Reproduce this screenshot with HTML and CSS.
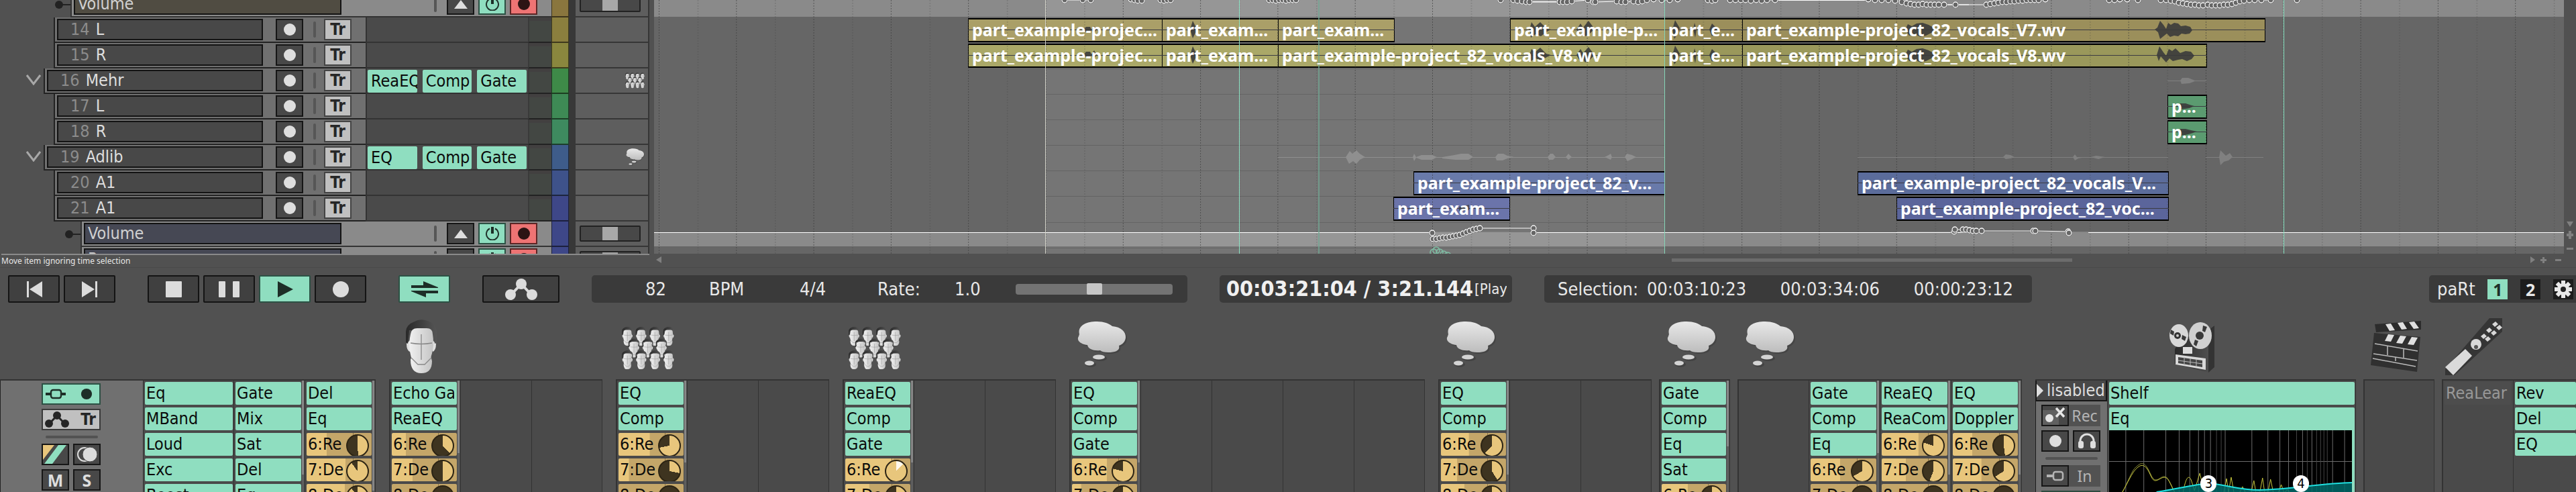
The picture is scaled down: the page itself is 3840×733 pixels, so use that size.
FILE: index.html
```html
<!DOCTYPE html>
<html lang="en">
<head>
<meta charset="utf-8">
<title>part_example-project_82</title>
<link rel="stylesheet" href="styles.css">
</head>
<body>
<svg class="defs" aria-hidden="true">
  <defs>
    <linearGradient id="g-cloud" x1="0" y1="0" x2="0" y2="1"><stop offset="0" stop-color="#e8e8e8"/><stop offset="1" stop-color="#bdbdbd"/></linearGradient>
    <linearGradient id="g-face" x1="0" y1="0" x2="1" y2="0"><stop offset="0" stop-color="#f0f0f0"/><stop offset="1" stop-color="#c4c4c4"/></linearGradient>
    <linearGradient id="g-dark" x1="0" y1="0" x2="1" y2="0"><stop offset="0" stop-color="#292929"/><stop offset="1" stop-color="#555"/></linearGradient>
    <symbol id="i-rec" viewBox="0 0 20 20"><circle cx="10" cy="10" r="9"/></symbol>
    <symbol id="i-up" viewBox="0 0 20 20"><path d="M10 4 20 17H0Z"/></symbol>
    <symbol id="i-power" viewBox="0 0 20 20"><path d="M6 2.5A9 9 0 1 0 14 2.5" fill="none" stroke="#20332b" stroke-width="2"/><path d="M8 0h4v10H8z"/></symbol>
    <symbol id="i-nodes" viewBox="0 0 48 32"><path d="M24 8 9 24M24 8l15 16" stroke="currentColor" stroke-width="4"/><circle cx="24" cy="8" r="8"/><circle cx="8" cy="24" r="8"/><circle cx="40" cy="24" r="8"/></symbol>
    <symbol id="i-io" viewBox="0 0 30 16"><path d="M0 6h8v4H0zM22 6h8v4h-8z"/><rect x="8" y="2" width="15" height="12" rx="3" fill="none" stroke="currentColor" stroke-width="2.4"/></symbol>
    <symbol id="a-head" viewBox="0 0 48 80">
      <path d="M8 60Q8 80 24 80Q40 80 40 62L38 54H10Z" fill="url(#g-face)"/>
      <path d="M2 36Q2 46 7 48L8 30ZM46 36Q46 46 41 48L40 30Z" fill="#e0e0e0"/>
      <path d="M1 34V18Q1 8 14 3Q24 -3 38 4Q47 8 47 20V34L44 36L42 16H6L4 36Z" fill="url(#g-dark)"/>
      <path d="M8 22Q9 13 18 13H32Q41 13 41 22Q44 40 38 57L29 67H19L9 57Q4 40 8 22Z" fill="url(#g-face)"/>
      <path d="M9 57 19 67H29L39 57M24 22V60M8 35Q24 38 40 35" fill="none" stroke="#888" stroke-width="1.3"/>
    </symbol>
    <symbol id="a-crowd" viewBox="0 0 84 66">
      <use href="#a-head" x="0" y="0" width="19" height="29"/><use href="#a-head" x="21" y="0" width="19" height="29"/><use href="#a-head" x="42" y="0" width="19" height="29"/><use href="#a-head" x="63" y="0" width="19" height="29"/>
      <use href="#a-head" x="10" y="18" width="19" height="29"/><use href="#a-head" x="31" y="18" width="19" height="29"/><use href="#a-head" x="52" y="18" width="19" height="29"/>
      <use href="#a-head" x="0" y="36" width="19" height="29"/><use href="#a-head" x="21" y="36" width="19" height="29"/><use href="#a-head" x="42" y="36" width="19" height="29"/><use href="#a-head" x="63" y="36" width="19" height="29"/>
    </symbol>
    <symbol id="a-cloud" viewBox="0 0 74 70">
      <path d="M3 20C0 8 12 1 29 1C40 1 47 4 52 8C65 9 72 16 72 24C72 30 68 35 62 37C64 44 57 47 46 47C40 47 36 46 34 44C24 45 16 42 15 36C5 35-2 29 2 23Z" fill="#3a3a3a" opacity=".5" transform="translate(2 2)"/>
      <path d="M3 20C0 8 12 1 29 1C40 1 47 4 52 8C65 9 72 16 72 24C72 30 68 35 62 37C64 44 57 47 46 47C40 47 36 46 34 44C24 45 16 42 15 36C5 35-2 29 2 23Z" fill="url(#g-cloud)"/>
      <ellipse cx="34" cy="56" rx="10" ry="4" fill="#3a3a3a" opacity=".6"/><ellipse cx="20" cy="65" rx="8" ry="4" fill="#3a3a3a" opacity=".6"/>
      <ellipse cx="32" cy="54" rx="9" ry="3.6" fill="#d4d4d4"/><ellipse cx="18" cy="63" rx="7" ry="3.4" fill="#d4d4d4"/>
    </symbol>
  </defs>
</svg>

<main class="app">
<section class="arranger">
  <div class="tcp">
    <div class="row env first" style="--in:105px;--lane:#504c42;--tint:#8a763e">
      <div class="env-main"><span class="bullet"></span><span class="field">Volume</span><span class="bar"></span>
        <button class="sq" aria-label="Move envelope"><svg class="ico"><use href="#i-up"/></svg></button><button class="sq on" aria-label="Bypass"><svg class="ico"><use href="#i-power"/></svg></button><button class="sq arm" aria-label="Arm"><svg class="ico"><use href="#i-rec"/></svg></button></div>
      <div class="tint"></div><div class="rail"></div><div class="side"><input type="range" class="mini" aria-label="Volume"></div>
    </div>
    <div class="row" style="--in:80px;--tint:#8b7f3e"><div class="main"><span class="field"><i>14</i>L</span><button class="sq" aria-label="Record arm"><svg class="ico"><use href="#i-rec"/></svg></button><span class="bar"></span><button class="sq tr">Tr</button></div><div class="fx"></div><div class="meter"></div><div class="tint"></div><div class="rail"></div><div class="side"></div></div>
    <div class="row" style="--in:80px;--tint:#8a873e"><div class="main"><span class="field"><i>15</i>R</span><button class="sq" aria-label="Record arm"><svg class="ico"><use href="#i-rec"/></svg></button><span class="bar"></span><button class="sq tr">Tr</button></div><div class="fx"></div><div class="meter"></div><div class="tint"></div><div class="rail"></div><div class="side"></div></div>
    <div class="row folder" style="--in:65px;--tint:#3e8a48"><div class="main"><svg class="fold" viewBox="0 0 22 16"><path d="M1 1 11 14 21 1"/></svg><span class="field"><i>16</i>Mehr</span><button class="sq" aria-label="Record arm"><svg class="ico"><use href="#i-rec"/></svg></button><span class="bar"></span><button class="sq tr">Tr</button></div><div class="fx"><button class="plug">ReaEQ</button><button class="plug">Comp</button><button class="plug">Gate</button></div><div class="meter"></div><div class="tint"></div><div class="rail"></div><div class="side"><svg class="thumb"><use href="#a-crowd"/></svg></div></div>
    <div class="row" style="--in:80px;--tint:#3e8a55"><div class="main"><span class="field"><i>17</i>L</span><button class="sq" aria-label="Record arm"><svg class="ico"><use href="#i-rec"/></svg></button><span class="bar"></span><button class="sq tr">Tr</button></div><div class="fx"></div><div class="meter"></div><div class="tint"></div><div class="rail"></div><div class="side"></div></div>
    <div class="row" style="--in:80px;--tint:#3e8a5f"><div class="main"><span class="field"><i>18</i>R</span><button class="sq" aria-label="Record arm"><svg class="ico"><use href="#i-rec"/></svg></button><span class="bar"></span><button class="sq tr">Tr</button></div><div class="fx"></div><div class="meter"></div><div class="tint"></div><div class="rail"></div><div class="side"></div></div>
    <div class="row folder" style="--in:65px;--tint:#3e5c8a"><div class="main"><svg class="fold" viewBox="0 0 22 16"><path d="M1 1 11 14 21 1"/></svg><span class="field"><i>19</i>Adlib</span><button class="sq" aria-label="Record arm"><svg class="ico"><use href="#i-rec"/></svg></button><span class="bar"></span><button class="sq tr">Tr</button></div><div class="fx"><button class="plug">EQ</button><button class="plug">Comp</button><button class="plug">Gate</button></div><div class="meter"></div><div class="tint"></div><div class="rail"></div><div class="side"><svg class="thumb"><use href="#a-cloud"/></svg></div></div>
    <div class="row" style="--in:80px;--tint:#3e528a"><div class="main"><span class="field"><i>20</i>A1</span><button class="sq" aria-label="Record arm"><svg class="ico"><use href="#i-rec"/></svg></button><span class="bar"></span><button class="sq tr">Tr</button></div><div class="fx"></div><div class="meter"></div><div class="tint"></div><div class="rail"></div><div class="side"></div></div>
    <div class="row" style="--in:80px;--tint:#3e4788"><div class="main"><span class="field"><i>21</i>A1</span><button class="sq" aria-label="Record arm"><svg class="ico"><use href="#i-rec"/></svg></button><span class="bar"></span><button class="sq tr">Tr</button></div><div class="fx"></div><div class="meter"></div><div class="tint"></div><div class="rail"></div><div class="side"></div></div>
    <div class="row env" style="--in:120px;--lane:#464854;--tint:#3e4788">
      <div class="env-main"><span class="bullet"></span><span class="field">Volume</span><span class="bar"></span>
        <button class="sq" aria-label="Move envelope"><svg class="ico"><use href="#i-up"/></svg></button><button class="sq on" aria-label="Bypass"><svg class="ico"><use href="#i-power"/></svg></button><button class="sq arm" aria-label="Arm"><svg class="ico"><use href="#i-rec"/></svg></button></div>
      <div class="tint"></div><div class="rail"></div><div class="side"><input type="range" class="mini" aria-label="Volume"></div>
    </div>
    <div class="row env" style="--in:120px;--lane:#464854;--tint:#3e4788">
      <div class="env-main"><span class="field">Pan</span><span class="bar"></span>
        <button class="sq" aria-label="Move envelope"><svg class="ico"><use href="#i-up"/></svg></button><button class="sq on" aria-label="Bypass"><svg class="ico"><use href="#i-power"/></svg></button><button class="sq arm" aria-label="Arm"><svg class="ico"><use href="#i-rec"/></svg></button></div>
      <div class="tint"></div><div class="rail"></div><div class="side"><input type="range" class="mini" aria-label="Pan"></div>
    </div>
  </div>

  <div class="timeline">
    <div class="selection" style="--s:583;--w:923"></div>
    <div class="lane short envlane"></div>
    <div class="lane">
      <div class="clip sand lit" style="--s:468;--w:290"><span>part_example-projec...</span></div>
      <div class="clip sand lit" style="--s:757;--w:174"><span>part_exam...</span></div>
      <div class="clip sand lit" style="--s:930;--w:174"><span>part_exam...</span></div>
      <div class="clip sand lit" style="--s:1276;--w:231"><span>part_example-p...</span></div>
      <div class="clip sand" style="--s:1506;--w:117"><span>part_e...</span></div>
      <div class="clip sand" style="--s:1622;--w:780"><span>part_example-project_82_vocals_V7.wv</span></div>
    </div>
    <div class="lane">
      <div class="clip olive lit" style="--s:468;--w:290"><span>part_example-projec...</span></div>
      <div class="clip olive lit" style="--s:757;--w:174"><span>part_exam...</span></div>
      <div class="clip olive lit" style="--s:930;--w:577"><span>part_example-project_82_vocals_V8.wv</span></div>
      <div class="clip olive" style="--s:1506;--w:117"><span>part_e...</span></div>
      <div class="clip olive" style="--s:1622;--w:693"><span>part_example-project_82_vocals_V8.wv</span></div>
    </div>
    <div class="lane"></div>
    <div class="lane"><div class="clip green" style="--s:2256;--w:59"><span>p...</span></div></div>
    <div class="lane"><div class="clip green" style="--s:2256;--w:59"><span>p...</span></div></div>
    <div class="lane"></div>
    <div class="lane">
      <div class="clip blue lit" style="--s:1132;--w:375"><span>part_example-project_82_v...</span></div>
      <div class="clip blue" style="--s:1794;--w:464"><span>part_example-project_82_vocals_V...</span></div>
    </div>
    <div class="lane">
      <div class="clip indigo lit" style="--s:1102;--w:174"><span>part_exam...</span></div>
      <div class="clip indigo" style="--s:1852;--w:406"><span>part_example-project_82_voc...</span></div>
    </div>
    <div class="lane envlane low"></div>
    <svg class="overlay" viewBox="0 0 2847 378" preserveAspectRatio="none">
      <defs>
        <pattern id="grid" patternUnits="userSpaceOnUse" x="7" y="0" width="115.3" height="4"><path d="M.5 0V2" stroke="#333" stroke-opacity=".6"/><path d="M58.5 0V2" stroke="#333" stroke-opacity=".3"/></pattern>
        <marker id="pt" viewBox="0 0 12 12" refX="6" refY="6" markerWidth="12" markerHeight="12" markerUnits="userSpaceOnUse"><circle cx="6" cy="6" r="5" fill="#444"/><circle cx="6" cy="6" r="4" fill="#666" stroke="#fff" stroke-width="1.3"/></marker>
      </defs>
      <rect width="2847" height="378" fill="url(#grid)"/>
      <path d="M583 102.5H1506M583 140.5H1506M583 178.5H1506M583 216.5H1506M583 254.5H1132M583 292.5H1506M583 331.5H1506M583 369.5H1506" stroke="#5c5c5c" stroke-opacity=".7"/>
      <g stroke="#3b3b42" fill="none"><path d="M468 44.500H1104M1276 44.500H2402M468 82.500H2315M2256 158.500H2315M2256 196.500H2315M1132 272.500H1507M1794 272.500H2258M1102 310.500H1276M1852 310.500H2258"/></g>
      <g fill="#3b3b3b" fill-opacity=".9">
        <path d="M640 44l4-4h6l2 4 4-5 4 5-4 5-4-4-2 3h-6zM640 82l4-5h6l2 4 4-6 4 7-4 5-4-4-2 2h-6zM799 44l4-13 4 8 5 5-5 5-4 8zM799 82l4-13 4 8 5 5-5 5-4 8z"/>
        <path d="M1305 44l3-11 5 7 8-7 9 9 7 2-6 3-9 7-8-3-7 5zM1375 44l6-9 4 6 8-10 9 12-8 8-6 3-6-8-3 4zM1305 82l3-9 5 5 8-7 9 9 7 2-6 3-9 5-8-3-7 4zM1375 82l6-9 4 6 8-9 9 12-8 8-6 3-6-8-3 4z"/>
        <path d="M1518 44l4-14 7 12-3 8-5 8zM1549 44l2-10 3 10-2 12zM1573 44l4-9 8 8-4 7-4 4zM1518 82l4-14 7 12-3 8-5 8zM1549 82l2-10 3 10-2 12zM1573 82l4-9 8 8-4 7-4 4z"/>
        <path d="M1865 44l4-8 6 3 7-4 9-1 9 3 9 5-3 6-10 5-8 2-9-4-8 2zM1865 82l4-8 6 3 7-4 9-1 9 3 9 5-3 6-10 5-8 2-9-4-8 2z"/>
        <path d="M2237 44l4-3 4-10 5 6 4 6 3-9 4 3 5-3 6 1 4 4 7-1 7 2 3 5-4 5-6 1-6-1-5 4-6-1-6 2-5-5-5 4-5 4-3-10zM2240 82l4-13 6 9 4 5 4-10 5 3 5-4 7 7 8-3 8 1 5 6-4 5-7 3-7-3-6 1-8 2-5-4-5 6-8-9-3 7z"/>
        <path d="M2273 158l2-4 8 0 6 2 7 2-7 3-6 1-8 1zM2273 196l2-4 8 0 8 2 9 2-9 3-8 2-8 1z"/>
        <path d="M1257 272l5-5 4 5-4 4zM1200 308l15-3v8l-15 2zM2116 272l2-5 3 5-3 6z" fill-opacity=".7"/>
      </g>
      <g fill="#8f8f8f"><path d="M930 234h576v1H930z"/>
        <path d="M1031 234l6-9 4 4 6-5 5 5 8 5-8 4-5 6-5-4-6 4zM1131 234l2-5 3 5 8-3 16 0 7 3-7 4-16 0-8-3-3 5zM1175 234l18-3 10-2h11l7 5-7 4h-20l-19-2zM1254 234l4-5h8l6 3 10 2-10 2-7 3h-9zM1332 234l4-5h4l4 5-4 4h-6zM1359 234l4-5 5 5-5 4zM1417 234l6-3 3-2 2 5-2 4zM1447 234l3-5 8 2 6 3-6 3-7 3z"/></g>
      <g fill="#808080"><path d="M1794 234h463v1h-463zM2313 234h86v1h-86zM2256 120h58v1h-58zM1852 345h405v1h-405zM1102 345h175v1h-175z"/>
        <path d="M2011 234l4-4 7 1 6 3-6 2-7 1zM2115 234l3-4 3 4 12 0-10 2-5 3zM2142 234l8-2 13 2-10 3zM2333 234l2-10 8 8 6-4 4 6-6 5-7 2-5 5zM2275 120l3-4h9l10 4 7 1-7 0-8 3-12 1z"/></g>
      <g class="envline"><path d="M0 346.500H1160M1316 346.500H1964M2138 346.500H2847"/><path d="M1306 2.500h45M1672 .5h139M1926 7h34"/></g>
      <g class="points">
        <polyline points="612,0 639,0 651,0"/><polyline points="711,-1 716,0 721,1 727,1"/><polyline points="755,0 760,1 765,0 770,0"/><polyline points="917,0 922,0 927,1 932,0 937,0 942,1 947,0 952,0 957,0"/>
        <polyline points="1262,0"/><polyline points="1281,0 1287,1 1294,2 1300,3 1305,3 1350,3 1355,3 1361,3 1368,2 1392,0 1400,3 1403,3 1435,2 1442,3 1448,3 1460,2 1467,3 1473,2 1480,0 1490,-1 1502,0 1514,0 1526,-1"/>
        <polyline points="1571,0 1577,1 1582,0"/><polyline points="1604,0 1612,0 1620,0 1627,0 1635,1 1643,0 1651,1 1659,0 1671,0"/>
        <polyline points="1810,-1 1820,0 1830,0 1840,0 1850,1 1860,3 1867,5 1873,6 1879,7 1885,7 1891,6 1897,7 1903,7 1909,7 1915,7 1923,7 1940,7 1986,7 1992,6 1998,5 2004,4 2010,3 2016,3 2022,2 2028,2 2034,1 2040,1 2046,0 2052,0 2058,0 2064,0 2074,-1"/>
        <polyline points="2169,0 2177,0 2185,-1 2196,-1 2212,0"/><polyline points="2246,0 2254,0 2261,1 2267,2 2273,4 2279,5 2285,6 2291,7 2297,7 2303,8 2309,8 2316,7 2322,8 2328,8 2334,8 2340,7 2346,7 2352,6 2358,4 2364,2 2370,1 2378,0 2386,0 2396,0 2410,0"/><polyline points="2449,0"/>
        <polyline points="1160,347 1161,356 1166,356 1171,355 1176,354 1181,354 1186,353 1191,352 1196,351 1201,350 1206,348 1211,346 1216,344 1221,342 1226,341 1231,340 1311,340 1311,347"/>
        <polyline points="1938,345 1939,342 1951,342 1956,342 1961,343 1966,344 1971,344 1979,344 2056,344 2059,344 2108,345 2109,347"/>
      </g>
      <g fill="none" stroke="#7fbfa5" stroke-width="1.500"><circle cx="1162" cy="376" r="5"/><circle cx="1166" cy="373" r="5"/><circle cx="1171" cy="376" r="5"/><circle cx="1177" cy="379" r="5"/><circle cx="1183" cy="381" r="5"/></g>
      <path d="M872.500 0V378M2429.500 0V378" stroke="#8ce4c4"/><path d="M991 0V378" stroke="#6fa893" stroke-width="2" stroke-opacity=".7"/><path d="M1506.500 0V378" stroke="#86d6b8"/><path d="M583.500 0V378" stroke="#d2d2c8"/>
    </svg>
  </div>
  <div class="vscroll"><svg viewBox="0 0 18 60"><path d="M4 12h10L9 20ZM7 26h4v4h3v4h-3v4H7v-4H4v-4h3zM4 51h10v3H4z" /></svg></div>
</section>

<div class="status"><span class="hint">Move item ignoring time selection</span>
  <div class="hscroll"><svg class="arrow" viewBox="0 0 8 10"><path d="M8 0V10L0 5Z"/></svg><span class="thumb-bar"></span><svg class="zoomers" viewBox="0 0 50 10"><path d="M2 0V10L9 5ZM20 1h3v3h3v3h-3v3h-3v-3h-3V4h3zM39 4h9v3h-9z"/></svg></div>
</div>

<nav class="transport">
  <div class="btns">
    <button class="tb" aria-label="Go to start"><svg viewBox="0 0 24 24"><path d="M1 0h3v24H1zM24 0V24L5 12Z"/></svg></button>
    <button class="tb" aria-label="Go to end"><svg viewBox="0 0 24 24"><path d="M20 0h3v24h-3zM0 0V24L19 12Z"/></svg></button>
  </div>
  <div class="btns">
    <button class="tb" aria-label="Stop"><svg viewBox="0 0 24 24"><rect width="24" height="24" rx="1"/></svg></button>
    <button class="tb" aria-label="Pause"><svg class="wide" viewBox="0 0 32 24"><rect width="10" height="24" rx="1"/><rect x="21" width="10" height="24" rx="1"/></svg></button>
    <button class="tb on" aria-label="Play"><svg viewBox="0 0 24 24"><path d="M1 0 24 12 1 24Z"/></svg></button>
    <button class="tb" aria-label="Record"><svg viewBox="0 0 24 24"><circle cx="12" cy="12" r="12"/></svg></button>
  </div>
  <button class="tb on" aria-label="Repeat"><svg class="loop" viewBox="0 0 40 24"><path d="M0 6H18V0L40 9V10H0ZM40 14V18H22V24L0 15V14Z"/></svg></button>
  <button class="tb big" aria-label="Automation"><svg class="loop tall"><use href="#i-nodes"/></svg></button>
  <div class="panel tempo"><span>82</span><span>BPM</span><span>4/4</span><label for="rate">Rate:</label><span>1.0</span><input id="rate" class="rate" type="range" min="0" max="100" value="50"></div>
  <div class="panel clock"><b>00:03:21:04 / 3:21.144</b><span>[Playing]</span></div>
  <div class="panel sel"><span>Selection:</span><span>00:03:10:23</span><span>00:03:34:06</span><span>00:00:23:12</span></div>
  <div class="panel layouts"><span>paRt</span><button class="lb on">1</button><button class="lb">2</button><button class="lb" aria-label="Settings"><svg viewBox="0 0 26 26"><g fill="currentColor"><path d="M10 0h6v26h-6zM0 10h26v6H0z"/><path d="M10 0h6v26h-6z" transform="rotate(45 13 13)"/><path d="M10 0h6v26h-6z" transform="rotate(-45 13 13)"/><circle cx="13" cy="13" r="9"/></g><circle cx="13" cy="13" r="4" fill="#222"/></svg></button></div>
</nav>

<section class="mixer">
  <div class="group master">
    <div class="art"></div>
    <div class="cols">
      <div class="ctl">
        <button class="wide-btn on" aria-label="Routing"><svg class="io"><use href="#i-io"/></svg><svg class="dot"><use href="#i-rec"/></svg></button>
        <button class="wide-btn pale"><svg class="nd"><use href="#i-nodes"/></svg>Tr</button>
        <span class="hbar"></span>
        <div class="pair"><button class="sq" aria-label="Effects"><svg class="full" viewBox="0 0 37 28"><path d="M0 0H17L0 22Z" fill="#e8c67c"/><path d="M23 0H35L14 28H2Z" fill="#8fdec0"/></svg></button><button class="sq" aria-label="Mono"><svg class="mono" viewBox="0 0 32 24"><circle cx="12" cy="12" r="10" fill="none" stroke="#dcdcdc" stroke-width="2"/><circle cx="20" cy="12" r="11" fill="#dcdcdc" stroke="#484848" stroke-width="1"/></svg></button></div>
        <div class="pair"><button class="sq ms">M</button><button class="sq ms">S</button></div>
      </div>
      <div class="col w135"><button class="slot">Eq</button><button class="slot">MBand</button><button class="slot">Loud</button><button class="slot">Exc</button><button class="slot">Boost</button></div>
      <div class="col sb" style="--sb:140px"><button class="slot">Gate</button><button class="slot">Mix</button><button class="slot">Sat</button><button class="slot">Del</button><button class="slot">Eq</button></div>
      <div class="col sb" style="--sb:164px"><button class="slot">Del</button><button class="slot">Eq</button><button class="slot send" style="--f:31%;--k:49%">6:Re</button><button class="slot send" style="--f:60%;--k:90%">7:De</button><button class="slot send" style="--f:59%;--k:90%">8:De</button></div>
    </div>
  </div>
  <div class="group"><div class="art"><svg class="a-head"><use href="#a-head"/></svg></div><div class="cols">
    <div class="col sb" style="--sb:108px"><button class="slot">Echo Ga</button><button class="slot">ReaEQ</button><button class="slot send" style="--f:22%;--k:38%">6:Re</button><button class="slot send" style="--f:32%;--k:50%">7:De</button><button class="slot send" style="--f:0%;--k:0%">8:De</button></div><div class="col"></div><div class="col"></div></div></div>
  <div class="group"><div class="art"><svg class="a-crowd"><use href="#a-crowd"/></svg></div><div class="cols">
    <div class="col sb" style="--sb:122px"><button class="slot">EQ</button><button class="slot">Comp</button><button class="slot send" style="--f:48%;--k:72%">6:Re</button><button class="slot send" style="--f:16%;--k:28%">7:De</button><button class="slot send" style="--f:0%;--k:0%">8:De</button></div><div class="col"></div><div class="col"></div></div></div>
  <div class="group"><div class="art"><svg class="a-crowd"><use href="#a-crowd"/></svg></div><div class="cols">
    <div class="col sb" style="--sb:122px"><button class="slot">ReaEQ</button><button class="slot">Comp</button><button class="slot">Gate</button><button class="slot send boost" style="--f:74%;--k:12%">6:Re</button><button class="slot send" style="--f:37%;--k:62%">7:De</button></div><div class="col"></div><div class="col"></div></div></div>
  <div class="group"><div class="art"><svg class="a-cloud"><use href="#a-cloud"/></svg></div><div class="cols">
    <div class="col sb" style="--sb:122px"><button class="slot">EQ</button><button class="slot">Comp</button><button class="slot">Gate</button><button class="slot send" style="--f:54%;--k:79%">6:Re</button><button class="slot send" style="--f:14%;--k:60%">7:De</button></div><div class="col"></div><div class="col"></div><div class="col"></div><div class="col"></div></div></div>
  <div class="group"><div class="art"><svg class="a-cloud"><use href="#a-cloud"/></svg></div><div class="cols">
    <div class="col sb" style="--sb:140px"><button class="slot">EQ</button><button class="slot">Comp</button><button class="slot send" style="--f:43%;--k:62%">6:Re</button><button class="slot send" style="--f:25%;--k:41%">7:De</button><button class="slot send" style="--f:36%;--k:62%">8:De</button></div><div class="col"></div><div class="col"></div></div></div>
  <div class="group near"><div class="art"><svg class="a-cloud"><use href="#a-cloud"/></svg></div><div class="cols">
    <div class="col sb" style="--sb:98px"><button class="slot">Gate</button><button class="slot">Comp</button><button class="slot">Eq</button><button class="slot">Sat</button><button class="slot send" style="--f:41%;--k:60%">6:Re</button></div></div></div>
  <div class="group near"><div class="art"><svg class="a-cloud"><use href="#a-cloud"/></svg></div><div class="cols">
    <div class="col"></div>
    <div class="col sb" style="--sb:108px"><button class="slot">Gate</button><button class="slot">Comp</button><button class="slot">Eq</button><button class="slot send" style="--f:45%;--k:67%">6:Re</button><button class="slot send" style="--f:0%;--k:0%">7:De</button></div>
    <div class="col sb" style="--sb:140px"><button class="slot">ReaEQ</button><button class="slot">ReaCom</button><button class="slot send" style="--f:56%;--k:80%">6:Re</button><button class="slot send" style="--f:37%;--k:56%">7:De</button><button class="slot send" style="--f:0%;--k:0%">8:De</button></div>
    <div class="col sb" style="--sb:140px"><button class="slot">EQ</button><button class="slot">Doppler</button><button class="slot send" style="--f:30%;--k:48%">6:Re</button><button class="slot send" style="--f:44%;--k:66%">7:De</button><button class="slot send" style="--f:0%;--k:0%">8:De</button></div></div></div>
  <div class="group grow"><div class="art film"><svg class="a-cam" viewBox="0 0 68 76">
      <path d="M8 40 14 30 56 6 67 4V66L58 75 8 62Z" fill="url(#g-dark)"/><path d="M58 75V12L67 5V67Z" fill="#333"/>
      <ellipse cx="14" cy="20" rx="14" ry="17" fill="#d8d8d8"/><ellipse cx="46" cy="20" rx="17" ry="20" fill="#d0d0d0"/>
      <circle cx="12" cy="20" r="5" fill="#333"/><circle cx="12" cy="20" r="2" fill="#ccc"/><circle cx="45" cy="20" r="6" fill="#3a3a3a"/>
      <path d="M2 11l5 3-1 6-5-3zM19 19l6 3-2 6-5-3zM50 5l6 2-3 8-4-2zM38 26l5 2-3 8-4-3z" fill="#3a3a3a"/>
      <path d="M20 37h14v10H20z" fill="#ddd"/><path d="M9 48 54 54V71L9 63Z" fill="#d8d8d8"/><path d="M13 52 49 57V67L13 61Z" fill="#444"/><path d="M22 52V62M31 54V65M40 55V66M13 57 49 62" stroke="#bbb"/></svg></div>
    <div class="cols">
    <div class="rec">
      <div class="mode"><svg viewBox="0 0 10 20"><path d="M0 0 10 10 0 20Z"/></svg>lisabled</div>
      <div class="recbody">
        <div class="labelled"><button class="sq" aria-label="Record mode"><svg class="full" viewBox="0 0 37 28"><path d="M0 6H24V28H0Z" fill="#606060"/><circle cx="10" cy="18" r="6" fill="#e6e6e6"/><path d="M20 3 32 16M32 3 20 16" stroke="#e6e6e6" stroke-width="3.500"/></svg></button><span>Rec</span></div>
        <div class="pair"><button class="sq" aria-label="Record arm"><svg class="ico"><use href="#i-rec"/></svg></button><button class="sq" aria-label="Monitor"><svg class="phones" viewBox="0 0 28 24"><path d="M4 15V12a10 10 0 0 1 20 0v3" fill="none" stroke="#e0e0e0" stroke-width="3"/><rect x="1" y="12" width="8" height="11" rx="3"/><rect x="19" y="12" width="8" height="11" rx="3"/></svg></button></div>
        <span class="hbar"></span>
        <div class="labelled"><button class="sq" aria-label="Input"><svg class="inp" viewBox="0 0 26 16"><path d="M0 6h9v4H0z"/><rect x="10" y="2" width="14" height="12" rx="3" fill="none" stroke="currentColor" stroke-width="2.500"/></svg></button><span>In</span></div>
        <div class="gmeter"></div>
      </div>
    </div>
    <div class="col stretch"><button class="slot">Shelf</button><button class="slot flat">Eq</button>
      <div class="graph"><svg viewBox="0 0 364 92" preserveAspectRatio="none">
        <rect width="364" height="92" fill="#000"/>
        <path d="M25 0V92M52 0V92M85 0V92M105 0V92M121 0V92M134 0V92M143 0V92M152 0V92M174 0V92M214 0V92M238 0V92M256 0V92M269 0V92M290 0V92M304 0V92M335 0V92M353 0V92M0 46.500H364" stroke="#6c6c6c"/>
        <path d="M161 0V92M168 0V92M281 0V92M297 0V92M311 0V92M317 0V92M322 0V92M327 0V92" stroke="#454545"/>
        <g fill="none"><path d="M20 92C28 78 34 60 40 55C46 50 50 46 56 54C62 62 64 74 70 74C76 74 80 66 86 70C92 76 96 90 100 94" stroke="#8a8a3a"/>
        <path d="M20 92C28 78 34 64 40 58C46 52 50 50 56 56C62 64 64 76 70 75C76 74 80 68 86 71C92 76 96 92 100 94M111 92C115 70 119 66 123 74L128 90 136 64 142 90M172 92L176 72 179 92 183 70 187 92M196 92L200 84 204 92M213 92L217 75 220 92M226 92L230 71 233 92M238 92L242 73 246 92M254 92L258 81 262 92M264 92L267 88 270 92" stroke="#c8c83c"/></g>
        <path d="M71 92C100 88 125 81 150 79C180 82 195 89 225 89C270 88 320 79 364 78V92Z" fill="#006a6a" fill-opacity=".85"/><path d="M71 92C100 88 125 81 150 79C180 82 195 89 225 89C270 88 320 79 364 78" fill="none" stroke="#1fe0e0" stroke-width="2"/>
        </svg><span class="band" style="left:41%">3</span><span class="band" style="left:79%">4</span></div>
    </div></div></div>
  <div class="group near"><div class="art clap"><svg viewBox="0 0 76 78">
      <path d="M6 5 75 0V13L8 17Z" fill="#2c2c2c"/><path d="M22 5 30 4 36 14 28 15ZM40 3 48 2 54 12 46 13ZM57 2 65 1 72 11 64 12Z" fill="#e0e0e0"/>
      <path d="M5 18 74 24 69 76 0 66Z" fill="#303030"/><path d="M26 20 35 21 30 31 21 30ZM44 22 53 23 47 34 38 33ZM61 24 70 25 64 36 55 35Z" fill="#e0e0e0"/>
      <path d="M6 34 70 45M4 49 69 59M3 56 67 68M25 38V51M49 42V55M37 54V60" stroke="#bbb" stroke-width="1.500"/></svg></div><div class="cols"><div class="col"></div></div></div>
  <div class="group near last"><div class="art remote"><svg viewBox="0 0 86 86">
      <path d="M66 0H85V20L14 85H0V76Z" fill="#353535"/><path d="M0 73 30 46 40 56 12 85Z" fill="#dadada"/><circle cx="46" cy="39" r="8" fill="#d8d8d8"/><circle cx="46" cy="43" r="3" fill="#555"/>
      <path d="M53 27l5-4 4 4-5 4zM61 18l5-4 4 4-5 4zM70 9l5-4 4 4-5 4zM59 31l5-4 4 4-5 4zM68 22l5-4 4 4-5 4zM76 14l5-4 4 4-5 4z" fill="#d8d8d8"/></svg></div><div class="cols">
    <div class="col"><button class="slot off">ReaLear</button></div><div class="col"><button class="slot">Rev</button><button class="slot">Del</button><button class="slot">EQ</button></div></div></div>
</section>
</main>
</body>
</html>
```
FILE: styles.css
```css
* { box-sizing: border-box; }
html, body { margin: 0; height: 100%; overflow: hidden; }
body { background: #515151; color: #dedede; font: 25px/32px "DejaVu Sans Condensed", "Noto Sans", sans-serif; }
button { font: inherit; color: inherit; margin: 0; padding: 0; border: 0; border-radius: 0; background: none; }
svg { display: block; fill: currentColor; }
.defs { position: absolute; width: 0; height: 0; }
.app { height: 100vh; display: flex; flex-direction: column; }

/* arranger */
.arranger { display: flex; flex: none; height: 378px; overflow: hidden; }
.tcp { flex: none; width: 975px; overflow: hidden; border-right: 7px solid #515151; }
.row { display: flex; height: 38px; padding-left: var(--in); }
.first { margin-top: -12px; }
.main, .env-main { position: relative; display: flex; align-items: center; border: 2px solid #222; border-width: 0 0 2px 2px; padding-left: 3px; }
.main { flex: 1; background: #707070; padding-right: 21px; }
.env-main { flex: 1; background: #8a8a8a; padding-right: 21px; gap: 6px; border-color: #333; }
.field { flex: 1; height: 32px; border: 2px solid #131313; background: #484848; padding-left: 18px; line-height: 27px; overflow: hidden; white-space: nowrap; }
.field i { font-style: normal; color: #8c8c8c; margin-right: 9px; }
.env .field { flex: none; width: calc(509px - var(--in) - 5px); padding-left: 4px; background: var(--lane); color: #d0d0d0; }
.env .bar { margin: 0 9px 0 auto; }
.bar { width: 4px; height: 24px; border-radius: 2px; background: #565656; }
.main .bar { margin: 0 12px 0 15px; }
.main .sq:first-of-type { margin-left: 19px; }
.sq { flex: none; width: 41px; height: 32px; border: 2px solid #161616; background: #484848; display: flex; align-items: center; justify-content: center; }
.ico { width: 20px; height: 20px; }
.tr { background: #c0c0c0; color: #262626; border-color: #444; font-weight: bold; font-size: 24px; }
.on { background: #8fdec0; color: #1d2e27; border-color: #2c5144; }
.arm { background: #ee7474; color: #2c1414; border-color: #5c2626; }
.bullet { position: absolute; left: -25px; top: 13px; width: 12px; height: 12px; border-radius: 6px; background: #222; }
.bullet::after { content: ""; position: absolute; left: 10px; top: 5px; width: 13px; height: 2px; background: #222; }
.fold { position: absolute; left: -28px; top: 9px; width: 22px; height: 16px; fill: none; stroke: #a8a8a8; stroke-width: 3px; }
.fx { flex: none; width: 242px; display: flex; gap: 8px; padding: 2px 2px 2px 1px; background: #4a4a4a; border-bottom: 2px solid #333; border-left: 2px solid #333; }
.plug { flex: 1; min-width: 0; height: 34px; background: #8fdec0; color: #0b0b0b; text-align: left; padding-left: 5px; line-height: 30px; overflow: hidden; white-space: nowrap; border-radius: 2px; }
.meter { flex: none; width: 35px; background: linear-gradient(#424040 5px, #434743 5px); border-bottom: 2px solid #222; border-left: 2px solid #3a3a3a; }
.tint { flex: none; width: 26px; background: var(--tint); border: solid rgba(0,0,0,.55); border-width: 0 1px 2px 1px; }
.rail { flex: none; width: 10px; background: #383838; }
.side { flex: none; width: 110px; background: #5e5e5e; border: solid #363636; border-width: 0 2px 2px 0; display: flex; align-items: center; justify-content: flex-end; padding-right: 4px; }
.thumb { width: 30px; height: 26px; }
.mini { appearance: none; width: 91px; height: 24px; margin: 0 7px 0 0; background: #484848; border: 2px solid #222; border-radius: 2px; }
.mini::-webkit-slider-thumb { appearance: none; width: 23px; height: 20px; background: #a8a8a8; }

/* timeline canvas */
.timeline { position: relative; flex: 1; min-width: 0; background: #666; overflow: hidden; }
.selection { position: absolute; top: 0; bottom: 0; left: calc(var(--s) / 2847 * 100%); width: calc(var(--w) / 2847 * 100%); background: #757575; }
.lane { position: relative; height: 38px; }
.short { height: 26px; }
.envlane::before { content: ""; position: absolute; inset: 0 0 1px 0; background: rgba(255,255,255,.24); }
.low::before { inset: 16px 0 1px 0; }
.clip { position: absolute; top: 1px; height: 36px; left: calc(var(--s) / 2847 * 100%); width: calc(var(--w) / 2847 * 100%); border: 1px solid #000; border-width: 2px 1px; padding-left: 5px; }
.clip span { position: relative; z-index: 3; color: #fff; font: bold 25px/31px "Noto Sans", sans-serif; white-space: nowrap; }
.sand { background: #9b8f5b; } .sand.lit { background: #aa9f68; }
.olive { background: #9a985b; } .olive.lit { background: #aaa868; }
.green { background: #5b9b70; }
.blue { background: #5b6c9b; } .blue.lit { background: #697aaa; }
.indigo { background: #5b659b; } .indigo.lit { background: #6b74aa; }
.overlay { position: absolute; left: 0; top: 0; width: 100%; height: 378px; z-index: 2; }
.envline { stroke: #fff; stroke-width: 1px; fill: none; }
.points polyline { fill: none; stroke: #fff; marker-start: url(#pt); marker-mid: url(#pt); marker-end: url(#pt); }
.vscroll { flex: none; width: 18px; display: flex; align-items: flex-end; }
.vscroll svg { width: 18px; height: 60px; fill: #808080; }

.status { flex: none; height: 21px; display: flex; border-bottom: 1px solid #4a4a4a; }
.hint { width: 966px; margin-left: 2px; border-top: 2px solid #8a8a8a; font: 12px/18px "Noto Sans", sans-serif; color: #e6e6e6; }
.hscroll { flex: 1; display: flex; align-items: center; padding: 0 20px 2px 10px; fill: #808080; }
.arrow { width: 8px; height: 10px; fill: #808080; }
.thumb-bar { height: 5px; width: 21%; margin-left: 53%; background: #6c6c6c; }
.zoomers { width: 50px; height: 10px; margin-left: auto; fill: #808080; }

/* transport */
.transport { flex: none; display: flex; gap: 48px; padding: 11px 0 0 12px; line-height: 41px; font-size: 27px; color: #e8e8e8; }
.btns { display: flex; gap: 6px; }
.tb { flex: none; width: 77px; height: 41px; border: 2px solid #141414; border-radius: 2px; background: #404040; color: #dcdcdc; display: flex; align-items: center; justify-content: center; }
.tb.on { background: #8fdec0; color: #1d2e27; border-color: #2c5144; }
.tb svg { width: 24px; height: 24px; }
.tb .wide { width: 32px; }
.tb .loop { width: 40px; }
.tb .tall { width: 48px; height: 32px; }
.tb.big { width: 115px; }
.panel { height: 41px; border-radius: 5px; background: #3a3a3a; white-space: nowrap; overflow: hidden; display: flex; align-items: center; }
.tempo { width: 888px; padding-left: 80px; display: grid; grid-template-columns: 95px 135px 116px 115px 91px 234px; }
.rate { appearance: none; width: 234px; height: 16px; margin: 0; border-radius: 4px; background: #737373; }
.rate::-webkit-slider-thumb { appearance: none; width: 23px; height: 17px; border-radius: 2px; background: #c6c6c6; }
.clock { width: 436px; padding: 0 8px 0 10px; gap: 2px; }
.clock b { flex: none; font-size: 32px; color: #f0f0f0; }
.clock span { font-size: 22px; overflow: hidden; }
.sel { width: 727px; padding: 0 28px 0 20px; justify-content: space-between; }
.sel span:first-child { margin-right: -38px; }
.layouts { margin-left: auto; width: 219px; padding: 0 4px 0 12px; justify-content: space-between; border-radius: 5px 0 0 5px; }
.lb { width: 30px; height: 30px; background: #1c1c1c; font: bold 25px/30px "Noto Sans", sans-serif; display: flex; justify-content: center; align-items: center; }
.lb.on { background: #8fdec0; color: #1d2e27; }
.lb svg { width: 26px; height: 26px; }

/* mixer */
.mixer { flex: 1; min-height: 0; display: flex; overflow: hidden; }
.group { flex: none; display: flex; flex-direction: column; margin-left: 20px; }
.group.master { margin-left: 0; }
.group.near { margin-left: 11px; }
.group.grow { flex: 1; min-width: 0; }
.art { flex: none; height: 114px; padding: 25px 0 0 8px; }
.a-head { width: 48px; height: 80px; margin-left: 16px; }
.a-crowd { width: 82px; height: 66px; margin-top: 10px; }
.a-cloud { width: 74px; height: 70px; margin: 2px 0 0 4px; }
.film { padding: 29px 0 0 200px; }
.a-cam { width: 68px; height: 76px; }
.clap { padding: 27px 0 0 11px; }
.clap svg { width: 76px; height: 78px; }
.remote { padding: 23px 0 0 5px; }
.remote svg { width: 86px; height: 86px; }
.cols { flex: 1; min-height: 0; display: flex; border-top: 2px solid #333; background: #4a4a4a; }
.col { flex: none; width: 106px; padding: 2px 3px 0 2px; border-left: 1px solid #333; display: flex; flex-direction: column; gap: 4px; }
.col:first-child { border-left-width: 2px; }
.col:last-child { border-right: 1px solid #333; padding-right: 2px; }
.w135 { width: 135px; padding-right: 1px; }
.col.stretch { flex: 1; width: auto; padding-right: 1px; }
.col.sb { padding-right: 5px; background: linear-gradient(#868686, #868686) right 1px top 0 / 3px var(--sb) no-repeat, linear-gradient(#5e5e5e, #5e5e5e) right 1px top 0 / 3px 100% no-repeat; }
.last .col:last-child { width: 94px; padding-right: 0; border-right: 0; }
.slot { position: relative; flex: none; height: 34px; border-radius: 2px; background: #8fdec0; color: #0b0b0b; text-align: left; padding-left: 2px; line-height: 30px; white-space: nowrap; overflow: hidden; border-right: 4px solid #8fdec0; }
.flat { border-radius: 2px 2px 0 0; }
.off { background: #4d4d4d; border-color: #4d4d4d; color: #989898; }
.send { background: linear-gradient(#e8c67c, #e8c67c) 0 0 / var(--f) 100% no-repeat, #c4a669; border-right: 0; }
.send::before { content: ""; position: absolute; left: 69px; top: 0; width: 1px; height: 34px; background: #8a7448; }
.send::after { content: ""; position: absolute; right: 4px; top: 2px; width: 30px; height: 30px; border-radius: 50%; border: 2px solid #2c2414; background: conic-gradient(#e8c67c var(--k), #3e3420 0); }
.boost::after { background: conic-gradient(#fff8ec var(--k), #e8c67c 0); }
.ctl { width: 213px; background: #707070; padding: 4px 0 0 61px; display: flex; flex-direction: column; gap: 6px; border-left: 1px solid #222; }
.wide-btn { flex: none; width: 88px; height: 32px; border: 2px solid #2c5144; display: flex; align-items: center; justify-content: space-between; padding: 0 10px 0 3px; }
.pale { background: #c0c0c0; color: #262626; border-color: #3a3a3a; font-weight: bold; font-size: 24px; padding-right: 5px; }
.io { width: 32px; height: 16px; } .dot { width: 18px; height: 18px; } .nd { width: 36px; height: 24px; }
.hbar { flex: none; width: 78px; height: 4px; margin: 2px 6px; border-radius: 2px; background: #525252; }
.pair { display: flex; gap: 6px; }
.full { width: 37px; height: 28px; } .mono { width: 32px; height: 24px; } .phones { width: 28px; height: 24px; } .inp { width: 26px; height: 16px; }
.ms { font: bold 25px/28px "Noto Sans", sans-serif; }
.rec { flex: none; width: 107px; background: #707070; border-left: 1px solid #1c1c1c; }
.mode { height: 31px; background: #484848; border: 2px solid #161616; border-top: 0; border-left-width: 1px; display: flex; align-items: center; gap: 5px; overflow: hidden; line-height: 28px; }
.mode svg { flex: none; width: 10px; height: 20px; }
.recbody { padding: 5px 8px 0 8px; display: flex; flex-direction: column; gap: 6px; }
.labelled { width: 88px; display: flex; background: #525252; font: 23px/32px "Noto Sans", sans-serif; color: #b4b4b4; }
.labelled span { flex: 1; text-align: center; }
.gmeter { height: 34px; width: 88px; background: #2c4a3e; }
.graph { position: relative; height: 92px; margin-top: -4px; border-right: 4px solid #8fdec0; }
.graph svg { width: 100%; height: 92px; }
.band { position: absolute; top: 67px; width: 24px; height: 25px; margin-left: -12px; border-radius: 12px; background: #fff; color: #000; font-size: 20px; line-height: 24px; text-align: center; }
```
